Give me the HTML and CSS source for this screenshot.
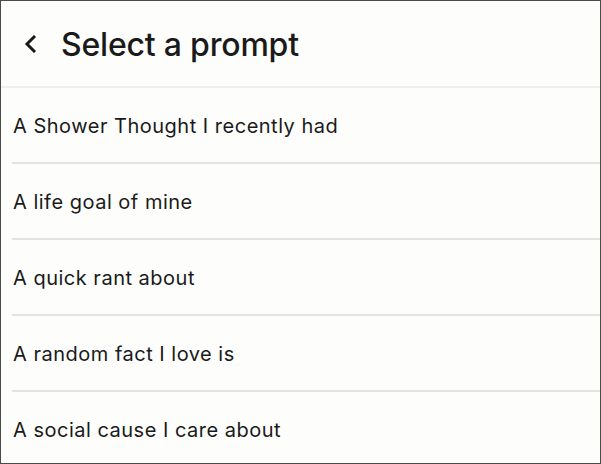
FILE: index.html
```html
<!DOCTYPE html>
<html>
<head>
<meta charset="utf-8">
<link rel="stylesheet" href="styles.css">
</head>
<body>
<div class="screen">
  <header class="header">
    <svg class="back" width="12" height="18" viewBox="0 0 12 18"><polyline points="10,2 3,9 10,16" fill="none" stroke="#1a1a1a" stroke-width="3" stroke-linecap="square"/></svg>
    <h1 class="title">Select a prompt</h1>
  </header>
  <ul class="list">
    <li class="item">A Shower Thought I recently had</li>
    <li class="item">A life goal of mine</li>
    <li class="item">A quick rant about</li>
    <li class="item">A random fact I love is</li>
    <li class="item">A social cause I care about</li>
  </ul>
</div>
</body>
</html>
```

FILE: styles.css
```css
html, body {
  margin: 0;
  padding: 0;
}
body {
  font-family: Inter, "Noto Sans", sans-serif;
  color: #1a1a1a;
  background: #fdfdfc;
}
.screen {
  box-sizing: border-box;
  width: 601px;
  height: 464px;
  border: 1px solid #4b4b4b;
  background: #fdfdfc;
  overflow: hidden;
}
.header {
  height: 85px;
  display: flex;
  align-items: center;
  border-bottom: 2px solid #efefee;
  padding-left: 23px;
}
.back {
  display: block;
  margin-right: 25px;
}
.title {
  margin: 0;
  font-size: 32px;
  font-weight: 500;
  letter-spacing: -0.2px;
  padding-top: 1px;
}
.list {
  list-style: none;
  margin: 0 0 0 11px;
  padding: 0;
}
.item {
  box-sizing: border-box;
  height: 76px;
  display: flex;
  align-items: center;
  border-bottom: 2px solid #e3e3e2;
  font-size: 20px;
  letter-spacing: 0.5px;
  padding-left: 1px;
  padding-top: 1px;
}
```
